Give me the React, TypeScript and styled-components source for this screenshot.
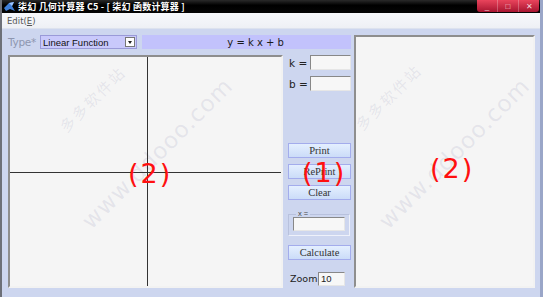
import React from 'react'
import styled, { createGlobalStyle } from 'styled-components'

const GlobalStyle = createGlobalStyle`
  html, body {
    margin: 0;
    padding: 0;
    background: #cdd6ef;
  }
  * {
    box-sizing: border-box;
  }
`

const Window = styled.div`
  position: relative;
  width: 543px;
  height: 297px;
  display: flex;
  flex-direction: column;
  overflow: hidden;
  font-family: 'Liberation Sans', 'Noto Sans CJK SC', sans-serif;
  background: #cdd6ef;
  border-left: 2px solid #6d7078;
  border-right: 3px solid #9aa6c8;
`

const TitleBar = styled.div`
  height: 13px;
  display: flex;
  align-items: center;
  background: linear-gradient(#2a2a2a, #000 40%, #050505);
  padding-left: 2px;
`

const TitleText = styled.span`
  color: #fff;
  font-size: 9px;
  font-weight: bold;
  margin-left: 3px;
  letter-spacing: 0.2px;
  white-space: nowrap;
  font-family: 'Noto Sans CJK SC', sans-serif;
`

const Caption = styled.div`
  margin-left: auto;
  margin-right: 1px;
  align-self: flex-start;
  height: 12px;
  width: 62px;
  display: flex;
  background: linear-gradient(#e9445c, #a71530);
  border-radius: 0 0 3px 3px;
`

const CaptionButton = styled.div`
  flex: 1;
  display: flex;
  align-items: center;
  justify-content: center;
  color: #f4d6db;
  font-size: 8px;
  border-left: 1px solid rgba(255, 255, 255, 0.25);
  &:first-child {
    border-left: none;
  }
`

const MenuBar = styled.div`
  height: 16px;
  display: flex;
  align-items: center;
  background: linear-gradient(#f7f8fb, #eef0f5);
  padding-left: 5px;
  font-family: 'DejaVu Sans', sans-serif;
  font-size: 8.5px;
  color: #555;
  border-bottom: 1px solid #dde2ee;
`

const Body = styled.div`
  flex: 1;
  display: flex;
  padding: 6px 5px 9px 6px;
`

const Main = styled.div`
  display: flex;
  flex-direction: column;
  gap: 6px;
  width: 344px;
`

const TypeRow = styled.div`
  display: flex;
  align-items: center;
  height: 14px;
`

const TypeLabel = styled.span`
  width: 32px;
  color: #8e96b0;
  font-size: 10.5px;
  font-family: 'DejaVu Sans', sans-serif;
  letter-spacing: -0.3px;
`

const Select = styled.div`
  width: 97px;
  height: 14px;
  display: flex;
  align-items: center;
  background: #c9c9fb;
  border: 1px solid #9a9ad8;
  font-size: 9.5px;
  color: #111;
  padding-left: 2px;
`

const SelectArrow = styled.div`
  margin-left: auto;
  margin-right: 1px;
  width: 10px;
  height: 10px;
  background: #fff;
  border: 1px solid #777;
  display: flex;
  align-items: center;
  justify-content: center;
  &::after {
    content: '';
    border-left: 2px solid transparent;
    border-right: 2px solid transparent;
    border-top: 3px solid #222;
  }
`

const Formula = styled.div`
  margin-left: 5px;
  flex: 1;
  height: 14px;
  display: flex;
  align-items: center;
  justify-content: center;
  background: #c2c2fc;
  font-family: 'DejaVu Sans', sans-serif;
  font-size: 10px;
  color: #1a1a1a;
  padding-left: 18px;
`

const WorkRow = styled.div`
  flex: 1;
  display: flex;
`

const Panel = styled.div`
  position: relative;
  background: #f5f5f5;
  border: 2px solid;
  border-color: #8e8e8e #f2f2f2 #f2f2f2 #8e8e8e;
  overflow: hidden;
`

const Canvas = styled(Panel)`
  width: 275px;
  height: 233px;
`

const Axes = styled.svg`
  position: absolute;
  inset: 0;
`

const Controls = styled.div`
  flex: 1;
  display: flex;
  flex-direction: column;
  padding-left: 5px;
`

const ParamRow = styled.div<{ $gap?: number }>`
  display: flex;
  align-items: center;
  height: 15px;
  margin-top: ${({ $gap }) => $gap ?? 0}px;
`

const ParamLabel = styled.span`
  width: 22px;
  padding-left: 1px;
  font-family: 'DejaVu Sans', sans-serif;
  font-size: 10.5px;
  color: #222;
`

const Field = styled.div<{ $w: number; $h?: number }>`
  width: ${({ $w }) => $w}px;
  height: ${({ $h }) => $h ?? 15}px;
  background: #f7f7f7;
  border: 1px solid;
  border-color: #888 #e6e6e6 #e6e6e6 #888;
  font-family: 'Liberation Sans', sans-serif;
  font-size: 9.5px;
  color: #222;
  padding-left: 2px;
  display: flex;
  align-items: center;
`

const Button = styled.div<{ $gap: number }>`
  width: 63px;
  height: 15px;
  margin-top: ${({ $gap }) => $gap}px;
  display: flex;
  align-items: center;
  justify-content: center;
  background: linear-gradient(#e4efff, #cbdcf8);
  border: 1px solid #a3acec;
  font-family: 'Liberation Serif', serif;
  font-size: 10.5px;
  color: #333;
`

const GroupBox = styled.fieldset`
  margin: 11px 0 0 0;
  padding: 0 3px 3px 4px;
  width: 62px;
  height: 25px;
  border: 1px solid #b8c1dd;
  border-right-color: #eef1fa;
  border-bottom-color: #eef1fa;
  display: flex;
`

const Legend = styled.legend`
  padding: 0 2px;
  margin-left: 3px;
  font-size: 7.5px;
  line-height: 6px;
  color: #444;
`

const ZoomRow = styled.div`
  display: flex;
  align-items: center;
  margin-top: 12px;
  height: 13px;
`

const ZoomLabel = styled.span`
  width: 30px;
  padding-left: 2px;
  font-family: 'DejaVu Sans', sans-serif;
  font-size: 9.5px;
  color: #222;
`

const SidePanel = styled(Panel)`
  margin-left: 3px;
  width: 181px;
  height: 253px;
`

const Note = styled.span<{ $x: number; $y: number }>`
  position: absolute;
  left: ${({ $x }) => $x}px;
  top: ${({ $y }) => $y}px;
  color: #ff1010;
  font-family: 'DejaVu Sans', sans-serif;
  font-size: 27px;
  letter-spacing: 2px;
  line-height: 1;
  pointer-events: none;
`

// faint diagonal site stamp, origin at the text's left middle
const Watermark = styled.span<{ $x: number; $y: number }>`
  position: absolute;
  left: ${({ $x }) => $x}px;
  top: ${({ $y }) => $y}px;
  line-height: 1;
  transform: translateY(-50%) rotate(-45deg);
  transform-origin: left center;
  color: rgba(140, 140, 175, 0.16);
  font-family: 'Noto Sans CJK SC', 'DejaVu Sans', sans-serif;
  white-space: nowrap;
  pointer-events: none;
`

const WmCn = styled(Watermark)`
  font-size: 15px;
  letter-spacing: 2px;
`

const WmUrl = styled(Watermark)`
  font-family: 'DejaVu Sans', sans-serif;
  font-size: 23px;
  letter-spacing: 1px;
`

function AppIcon() {
  return (
    <svg width="11" height="10" viewBox="0 0 11 10">
      <path d="M0 6 L5 1 L10 0 L8 4 L11 9 L6 7 L2 9 Z" fill="#3f7fd8" />
      <path d="M5 1 L10 0 L8 4 Z" fill="#9cc4ff" />
    </svg>
  )
}

export default function App() {
  return (
    <>
      <GlobalStyle />
      <Window>
        <TitleBar>
          <AppIcon />
          <TitleText>柒幻 几何计算器 C5 - [ 柒幻 函数计算器 ]</TitleText>
          <Caption>
            <CaptionButton>_</CaptionButton>
            <CaptionButton>□</CaptionButton>
            <CaptionButton>✕</CaptionButton>
          </Caption>
        </TitleBar>
        <MenuBar>
          Edit(<u>E</u>)
        </MenuBar>
        <Body>
          <Main>
            <TypeRow>
              <TypeLabel>Type*</TypeLabel>
              <Select>
                Linear Function
                <SelectArrow />
              </Select>
              <Formula>y = k x + b</Formula>
            </TypeRow>
            <WorkRow>
              <Canvas>
                <WmCn $x={52} $y={72}>多多软件站</WmCn>
                <WmUrl $x={76} $y={168}>www.ddooo.com</WmUrl>
                <Axes width="271" height="229">
                  <line x1="137.5" y1="0" x2="137.5" y2="229" stroke="#333" strokeWidth="1" />
                  <line x1="0" y1="115.5" x2="271" y2="115.5" stroke="#333" strokeWidth="1" />
                </Axes>
              </Canvas>
              <Controls>
                <ParamRow>
                  <ParamLabel>k =</ParamLabel>
                  <Field $w={41} />
                </ParamRow>
                <ParamRow $gap={6}>
                  <ParamLabel>b =</ParamLabel>
                  <Field $w={41} />
                </ParamRow>
                <Button $gap={52}>Print</Button>
                <Button $gap={6}>RePrint</Button>
                <Button $gap={6}>Clear</Button>
                <GroupBox>
                  <Legend>x =</Legend>
                  <Field $w={52} $h={14} />
                </GroupBox>
                <Button $gap={9}>Calculate</Button>
                <ZoomRow>
                  <ZoomLabel>Zoom</ZoomLabel>
                  <Field $w={27} $h={14}>10</Field>
                </ZoomRow>
              </Controls>
            </WorkRow>
          </Main>
          <SidePanel>
            <WmCn $x={2} $y={90}>多多软件站</WmCn>
            <WmUrl $x={27} $y={188}>www.ddooo.com</WmUrl>
          </SidePanel>
        </Body>
        <Note $x={126} $y={160}>(2)</Note>
        <Note $x={300} $y={159}>(1)</Note>
        <Note $x={428} $y={155}>(2)</Note>
      </Window>
    </>
  )
}
